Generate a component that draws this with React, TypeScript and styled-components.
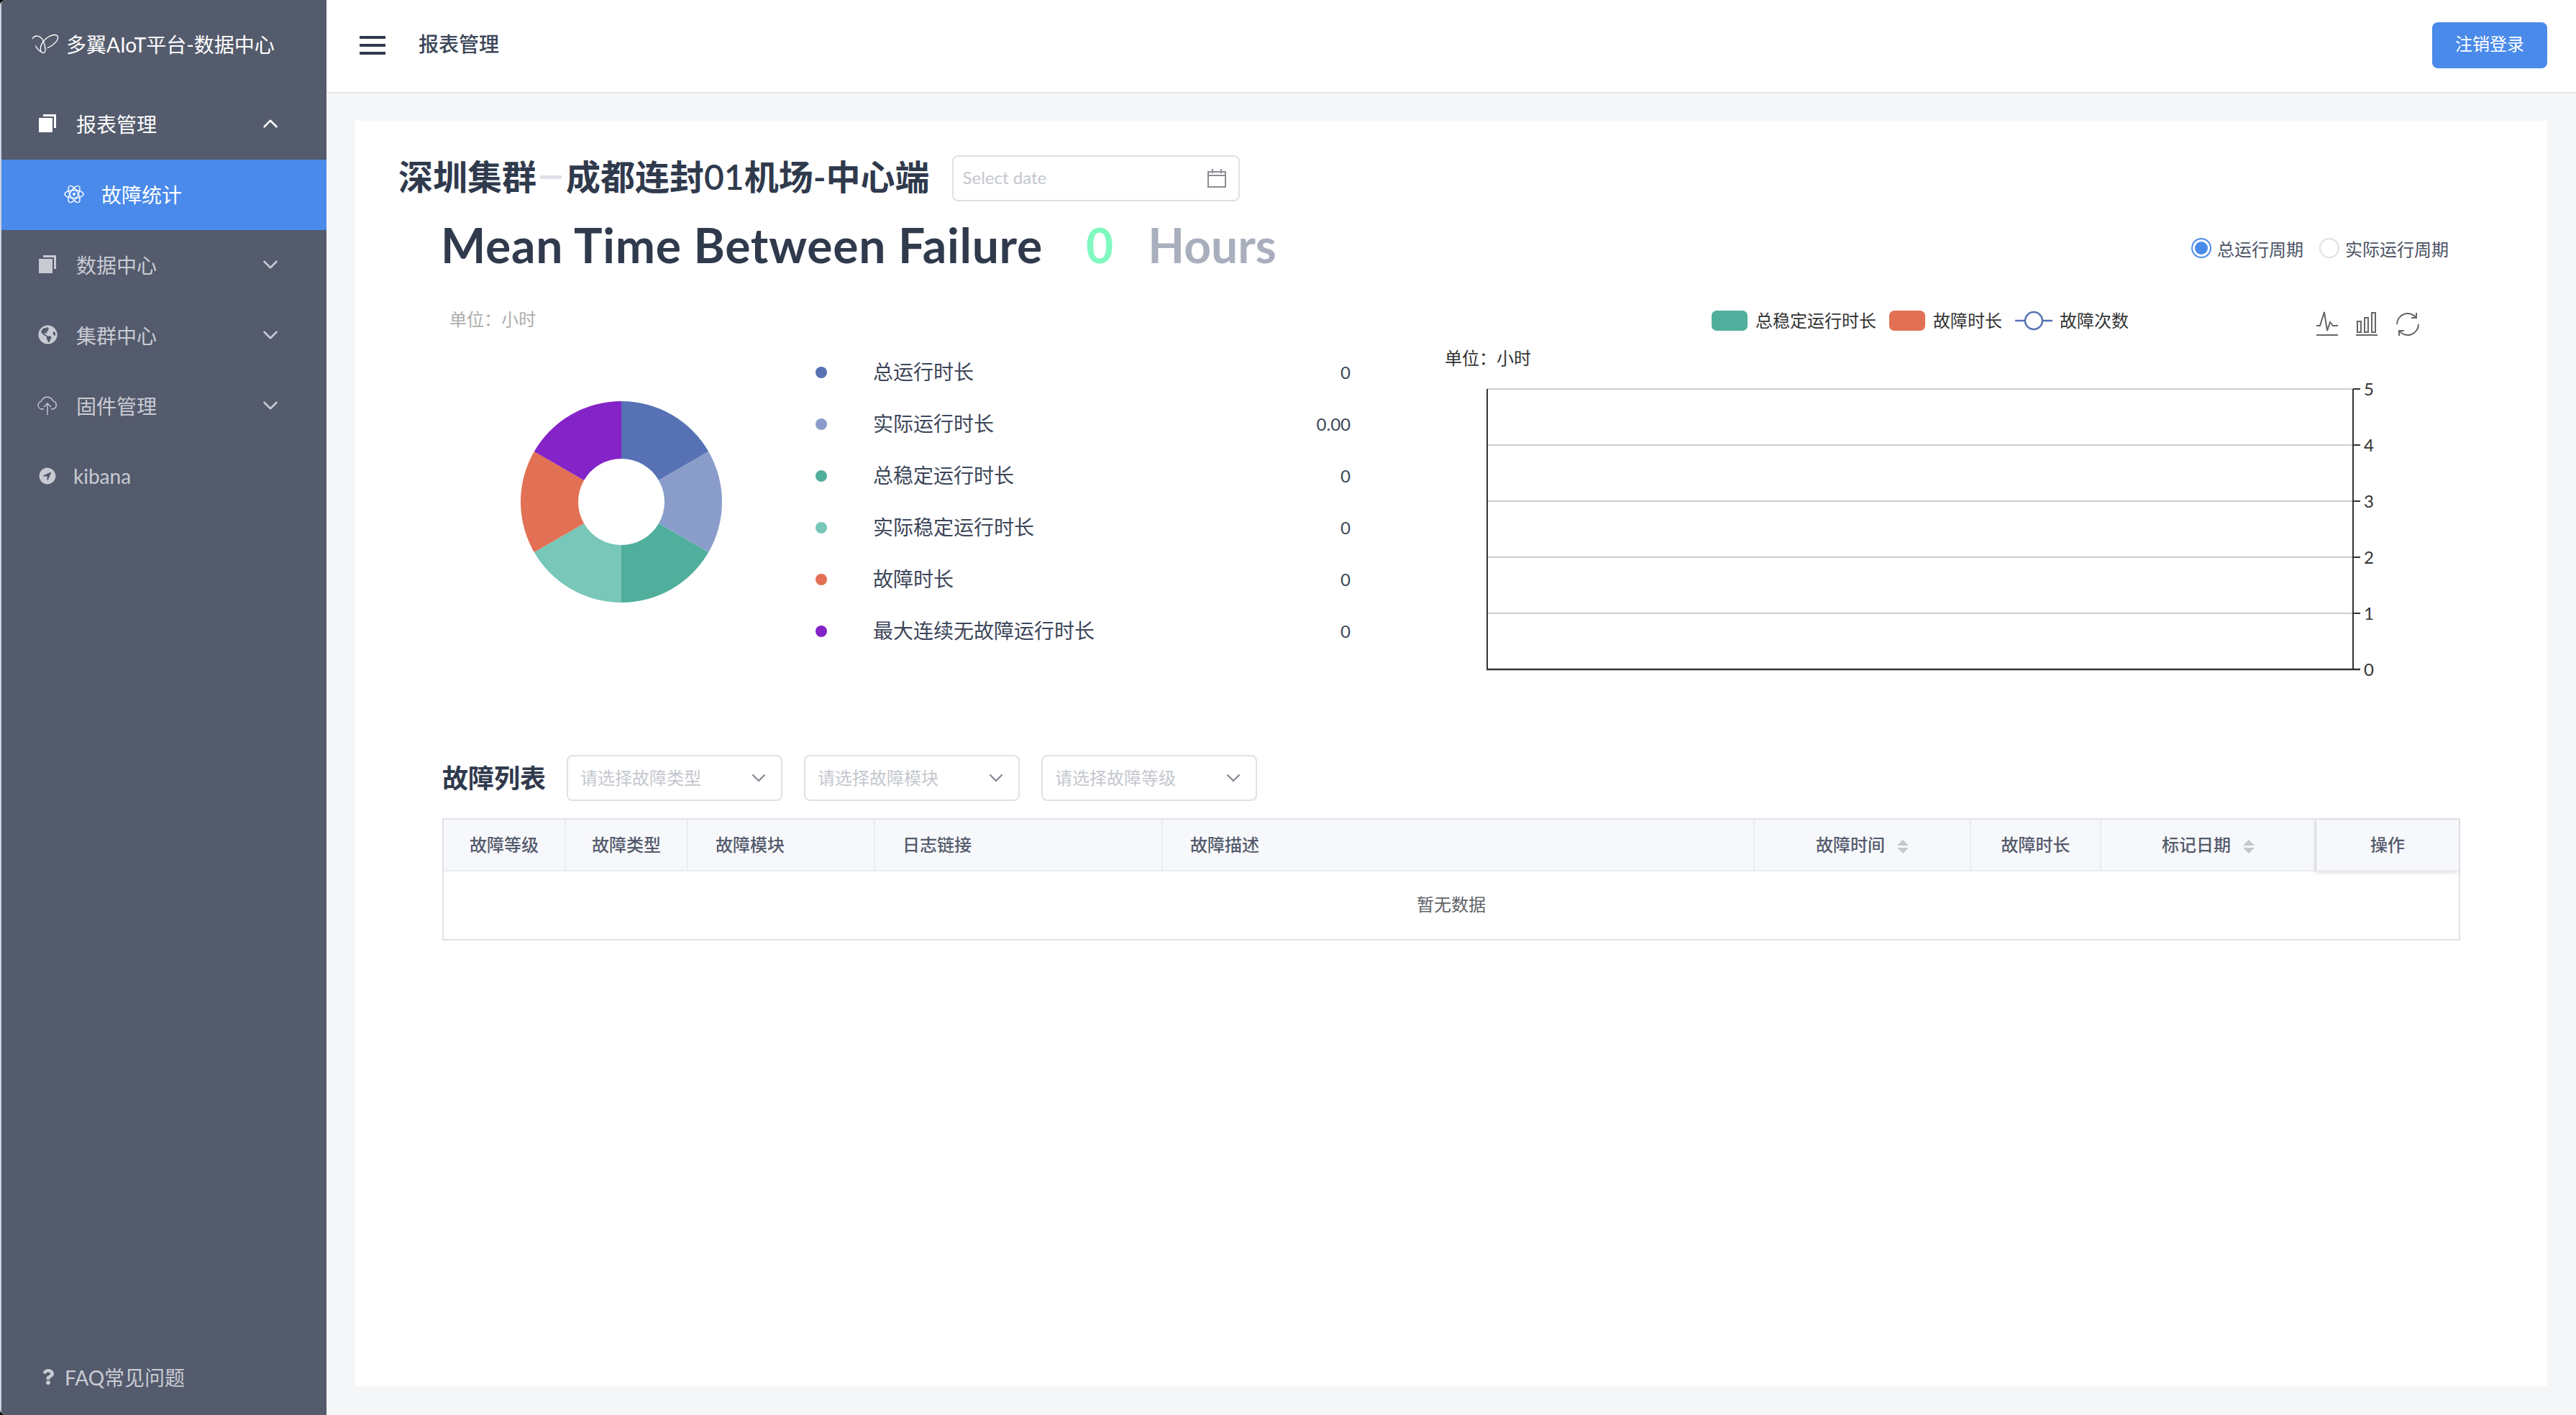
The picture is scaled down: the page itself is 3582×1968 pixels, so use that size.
import styled, { createGlobalStyle } from "styled-components";
import { ChevronDown, ChevronUp } from "lucide-react";
import { FaGlobeAmericas, FaQuestion } from "react-icons/fa";
import { IoNavigateCircle } from "react-icons/io5";

const GlobalStyle = createGlobalStyle`
  html, body {
    margin: 0;
    padding: 0;
    background: #000;
  }
  body {
    font-family: "Lato", "Noto Sans CJK SC", sans-serif;
    color: #303a4d;
  }
`;

const Shell = styled.div`
  width: 3582px;
  height: 1968px;
  display: flex;
  overflow: hidden;
  background: #f5f6f8;
  border-radius: 8px 0 0 8px;
`;

const Sidebar = styled.aside`
  width: 454px;
  flex: 0 0 454px;
  box-sizing: border-box;
  border-left: 2px solid #cdd4e2;
  background: #545b6d;
  display: flex;
  flex-direction: column;
  color: #c9cbd3;
  font-size: 28px;
`;

const Brand = styled.div`
  height: 124px;
  box-sizing: border-box;
  display: flex;
  align-items: center;
  gap: 10px;
  padding: 0 0 3px 42px;
  color: #fff;
`;

const NavRow = styled.div<{ $active?: boolean; $sub?: boolean; $open?: boolean; $gap?: number }>`
  height: 98px;
  flex: 0 0 98px;
  box-sizing: border-box;
  display: flex;
  align-items: center;
  gap: ${(p) => p.$gap ?? 26}px;
  padding: 0 61px 3px ${(p) => (p.$sub ? 87 : 50)}px;
  background: ${(p) => (p.$active ? "#4a8aea" : "transparent")};
  color: ${(p) => (p.$active || p.$open ? "#fff" : "#c9cbd3")};
`;

const NavIcon = styled.span`
  width: 28px;
  height: 28px;
  display: flex;
  align-items: center;
  justify-content: center;
  flex: none;
`;

const NavArrow = styled.span`
  margin-left: auto;
  display: flex;
`;

const Faq = styled.div`
  margin-top: auto;
  height: 106px;
  box-sizing: border-box;
  display: flex;
  align-items: center;
  gap: 12px;
  padding-left: 54px;
`;

const Main = styled.div`
  flex: 1;
  min-width: 0;
  display: flex;
  flex-direction: column;
`;

const TopBar = styled.header`
  height: 130px;
  flex: none;
  box-sizing: border-box;
  background: #fff;
  border-bottom: 2px solid #e4e6ea;
  display: flex;
  align-items: center;
  padding: 0 40px 3px 46px;
`;

const Hamburger = styled.div`
  width: 36px;
  height: 26px;
  box-sizing: border-box;
  border-top: 4px solid #2f3a4e;
  border-bottom: 4px solid #2f3a4e;
  display: flex;
  align-items: center;
  &::before {
    content: "";
    width: 100%;
    height: 4px;
    background: #2f3a4e;
  }
`;

const PageName = styled.div`
  margin-left: 46px;
  padding-bottom: 5px;
  font-size: 28px;
  font-weight: 500;
  color: #3c4659;
`;

const LogoutButton = styled.button`
  margin-left: auto;
  width: 160px;
  height: 64px;
  padding: 0 0 6px;
  border: 0;
  border-radius: 8px;
  background: #4a8aea;
  color: #fff;
  font: inherit;
  font-size: 24px;
`;

const Content = styled.main`
  flex: 1;
  min-height: 0;
  display: flex;
  padding: 38px 40px 40px;
`;

const Card = styled.section`
  flex: 1;
  box-sizing: border-box;
  background: #fff;
  padding: 48px 0 0 60px;
`;

const TitleRow = styled.div`
  display: flex;
  align-items: center;
  gap: 31px;
  height: 64px;
`;

const Title = styled.h1`
  margin: 0;
  padding-bottom: 4px;
  font-size: 48px;
  font-weight: 600;
  line-height: 60px;
  color: #303a4d;
  white-space: nowrap;
  display: flex;
  align-items: center;
`;

const TitleDash = styled.span`
  width: 30px;
  height: 5px;
  margin: 0 6px 0 5px;
  background: #dfe1e6;
`;

const Field = styled.div<{ $width: number; $left: number; $right: number }>`
  width: ${(p) => p.$width}px;
  height: 64px;
  box-sizing: border-box;
  border: 2px solid #dfe1e6;
  border-radius: 8px;
  display: flex;
  align-items: center;
  justify-content: space-between;
  padding: 0 ${(p) => p.$right}px 0 ${(p) => p.$left}px;
  font-size: 24px;
  color: #c4c7ce;
  background: #fff;
`;

const FieldText = styled.span`
  padding-bottom: 4px;
`;

const MttfRow = styled.div`
  height: 120px;
  margin-left: 59px;
  padding-right: 137px;
  display: flex;
  align-items: center;
`;

const MttfTitle = styled.h2`
  margin: 0;
  font-size: 66px;
  font-weight: 700;
  letter-spacing: 0.75px;
  color: #303a4d;
  white-space: nowrap;
`;

const MttfValue = styled.span`
  margin-left: 60px;
  font-size: 66px;
  font-weight: 700;
  color: #7ff9c0;
`;

const MttfUnit = styled.span`
  margin-left: 48px;
  font-size: 66px;
  font-weight: 700;
  color: #a9afbd;
`;

const RadioGroup = styled.div`
  margin-left: auto;
  display: flex;
  align-items: center;
  gap: 22px;
  font-size: 24px;
  color: #4b5364;
  padding-top: 10px;
`;

const RadioItem = styled.label`
  display: flex;
  align-items: center;
  gap: 8px;
`;

const RadioDot = styled.span<{ $checked?: boolean }>`
  width: 28px;
  height: 28px;
  box-sizing: border-box;
  border-radius: 50%;
  border: 2px solid ${(p) => (p.$checked ? "#4a8aea" : "#dfe1e6")};
  display: flex;
  align-items: center;
  justify-content: center;
  &::after {
    content: "";
    width: 18px;
    height: 18px;
    border-radius: 50%;
    background: ${(p) => (p.$checked ? "#4a8aea" : "transparent")};
  }
`;

const ChartRow = styled.div`
  display: flex;
  margin: 24px 0 0 64px;
`;

const StatsPanel = styled.div`
  width: 1391px;
  flex: none;
`;

const StatsUnit = styled.div`
  height: 40px;
  line-height: 40px;
  margin-left: 7px;
  font-size: 24px;
  color: #adadad;
`;

const StatsBody = styled.div`
  margin-top: 18px;
  display: flex;
  align-items: center;
`;

const Donut = styled.svg`
  display: block;
  width: 280px;
  height: 280px;
  margin-left: 106px;
  flex: none;
`;

const StatsList = styled.ul`
  list-style: none;
  margin: 0 0 0 130px;
  padding: 0;
  width: 744px;
`;

const StatsItem = styled.li`
  height: 72px;
  display: flex;
  align-items: center;
`;

const StatsDot = styled.span<{ $color: string }>`
  width: 16px;
  height: 16px;
  border-radius: 50%;
  background: ${(p) => p.$color};
  flex: none;
`;

const StatsLabel = styled.span`
  margin-left: 64px;
  padding-bottom: 4px;
  font-size: 28px;
  color: #3c4659;
`;

const StatsValue = styled.span`
  margin-left: auto;
  padding-bottom: 2px;
  font-size: 24px;
  color: #3c4659;
`;

const TrendPanel = styled.div`
  flex: 1;
  min-width: 0;
`;

const TrendTop = styled.div`
  height: 54px;
  display: flex;
  align-items: flex-start;
  margin-left: 371px;
`;

const Legend = styled.div`
  display: flex;
  align-items: center;
  height: 44px;
  font-size: 24px;
  color: #333;
`;

const LegendSwatch = styled.span<{ $color: string }>`
  width: 50px;
  height: 28px;
  margin: 0 11px 0 0;
  border-radius: 7px;
  background: ${(p) => p.$color};
`;

const LegendText = styled.span<{ $last?: boolean }>`
  margin-right: ${(p) => (p.$last ? 0 : 18)}px;
  padding-bottom: 3px;
`;

const LegendLine = styled.svg`
  display: block;
  width: 52px;
  height: 28px;
  margin-right: 10px;
`;

const Tools = styled.div`
  margin: 8px 0 0 261px;
  display: flex;
  gap: 25px;
`;

const TrendUnit = styled.div`
  height: 40px;
  line-height: 40px;
  font-size: 24px;
  color: #333;
`;

const Plot = styled.svg`
  display: block;
  width: 1290px;
  height: 420px;
  margin: 11px 0 0 58px;
  font-family: "Lato", "Noto Sans CJK SC", sans-serif;
  font-size: 24px;
`;

const FilterRow = styled.div`
  margin: 101px 0 0 61px;
  display: flex;
  align-items: center;
  gap: 30px;
`;

const FilterTitle = styled.h3`
  margin: 0 -1px 0 0;
  padding-bottom: 4px;
  font-size: 36px;
  font-weight: 600;
  color: #303a4d;
`;

const Table = styled.table`
  width: 2806px;
  margin: 24px 0 0 61px;
  box-sizing: border-box;
  border: 2px solid #dfe1e6;
  border-collapse: separate;
  border-spacing: 0;
  table-layout: fixed;
  font-size: 24px;
`;

const Th = styled.th<{ $left?: boolean; $fixed?: boolean }>`
  height: 72px;
  box-sizing: border-box;
  padding: 0 0 3px ${(p) => (p.$left ? 38 : 0)}px;
  text-align: ${(p) => (p.$left ? "left" : "center")};
  font-weight: 500;
  color: #545b6d;
  background: #f7f8fb;
  border-bottom: 2px solid #ebecf0;
  border-right: 2px solid #ebecf0;
  position: relative;
  ${(p) => (p.$fixed ? "border-right: 0; box-shadow: -2px 2px 5px rgba(0, 0, 0, 0.12);" : "")}
`;

const SortCarets = styled.span`
  display: inline-flex;
  flex-direction: column;
  gap: 3px;
  margin-left: 17px;
  vertical-align: middle;
  &::before,
  &::after {
    content: "";
    border-left: 8px solid transparent;
    border-right: 8px solid transparent;
  }
  &::before {
    border-bottom: 8px solid #c4c7ce;
  }
  &::after {
    border-top: 8px solid #c4c7ce;
  }
`;

const EmptyCell = styled.td`
  height: 94px;
  padding-bottom: 6px;
  box-sizing: border-box;
  text-align: center;
  color: #606266;
`;

const slices = ["#5672b4", "#8a9dca", "#50af9c", "#78c7b8", "#e27054", "#8423c7"];

const stats = [
  { label: "总运行时长", value: "0", color: slices[0] },
  { label: "实际运行时长", value: "0.00", color: slices[1] },
  { label: "总稳定运行时长", value: "0", color: slices[2] },
  { label: "实际稳定运行时长", value: "0", color: slices[3] },
  { label: "故障时长", value: "0", color: slices[4] },
  { label: "最大连续无故障运行时长", value: "0", color: slices[5] },
];

const columns = [
  { name: "故障等级", width: 170 },
  { name: "故障类型", width: 170 },
  { name: "故障模块", width: 260, left: true },
  { name: "日志链接", width: 400, left: true },
  { name: "故障描述", width: 823, left: true },
  { name: "故障时间", width: 301, sort: true },
  { name: "故障时长", width: 181 },
  { name: "标记日期", width: 299, sort: true },
  { name: "操作", width: 198, fixed: true },
];

const point = (r: number, deg: number) => {
  const a = ((deg - 90) * Math.PI) / 180;
  return `${140 + r * Math.cos(a)} ${140 + r * Math.sin(a)}`;
};

const slicePath = (i: number) => {
  const a = i * 60;
  const b = a + 60;
  return `M${point(60, a)} L${point(140, a)} A140 140 0 0 1 ${point(140, b)} L${point(60, b)} A60 60 0 0 0 ${point(60, a)} Z`;
};

const ticks = [
  { y: 12, label: "5" },
  { y: 90, label: "4" },
  { y: 168, label: "3" },
  { y: 246, label: "2" },
  { y: 324, label: "1" },
];

const Logo = () => (
  <svg width="38" height="30" viewBox="130 90 112 82" fill="none" stroke="#fff" strokeWidth="4">
    <path d="M133 110C145 92 170 95 180 125C187 145 190 168 178 168C165 165 150 150 146 138" />
    <path d="M194 148C225 135 245 110 235 98C222 88 190 100 172 130C166 140 165 150 168 160" />
  </svg>
);

const CopyIcon = () => (
  <svg width="24" height="25" viewBox="0 0 24 25" fill="currentColor">
    <path d="M6 0H24V19H21V3H6Z" />
    <rect x="0" y="5" width="19" height="20" />
  </svg>
);

const AtomIcon = () => (
  <svg width="28" height="30" viewBox="0 0 28 30" fill="none" stroke="#fff" strokeWidth="1.4">
    <ellipse cx="14" cy="15" rx="13" ry="5.5" />
    <ellipse cx="14" cy="15" rx="13" ry="5.5" transform="rotate(60 14 15)" />
    <ellipse cx="14" cy="15" rx="13" ry="5.5" transform="rotate(120 14 15)" />
    <circle cx="14" cy="15" r="2" fill="#fff" stroke="none" />
  </svg>
);

const CloudIcon = () => (
  <svg width="28" height="26" viewBox="0 0 28 26" fill="none" stroke="currentColor" strokeWidth="1.4">
    <path d="M9 18H6.5A5.5 5.5 0 0 1 5.5 7.1A8.5 8.5 0 0 1 21.5 6.6A5.8 5.8 0 0 1 21.5 18H19" />
    <path d="M14 26V10M9 15L14 10L19 15" />
  </svg>
);

const CalendarIcon = () => (
  <svg width="26" height="26" viewBox="0 0 26 26" fill="none" stroke="#8b8d92" strokeWidth="2">
    <rect x="1" y="4" width="24" height="21" />
    <path d="M1 9H25M7 0V6M19 0V6" />
  </svg>
);

const LineIcon = () => (
  <svg width="30" height="36" viewBox="0 0 30 36" fill="none" stroke="#666" strokeWidth="2">
    <path d="M0 21H5L11 2L15 28L19 16L23 21H30" />
    <path d="M0 34H30" />
  </svg>
);

const BarIcon = () => (
  <svg width="30" height="36" viewBox="0 0 30 36" fill="none" stroke="#666" strokeWidth="2">
    <path d="M2 15H7V30H2ZM12 10H17V30H12ZM22 3H27V30H22Z" />
    <path d="M0 34H30" />
  </svg>
);

const RefreshIcon = () => (
  <svg width="34" height="36" viewBox="0 0 34 36" fill="none" stroke="#666" strokeWidth="2">
    <path d="M2 19A15 15 0 0 1 29 10M29 3V10H22" />
    <path d="M32 19A15 15 0 0 1 5 28M5 35V28H12" />
  </svg>
);

const App = () => {
  return (
    <Shell>
      <GlobalStyle />
      <Sidebar>
        <Brand>
          <Logo />
          <span>多翼AIoT平台-数据中心</span>
        </Brand>
        <NavRow $open>
          <NavIcon>
            <CopyIcon />
          </NavIcon>
          报表管理
          <NavArrow>
            <ChevronUp size={34} strokeWidth={1.8} />
          </NavArrow>
        </NavRow>
        <NavRow $active $sub $gap={24}>
          <NavIcon>
            <AtomIcon />
          </NavIcon>
          故障统计
        </NavRow>
        <NavRow>
          <NavIcon>
            <CopyIcon />
          </NavIcon>
          数据中心
          <NavArrow>
            <ChevronDown size={34} strokeWidth={1.8} />
          </NavArrow>
        </NavRow>
        <NavRow>
          <NavIcon>
            <FaGlobeAmericas size={27} />
          </NavIcon>
          集群中心
          <NavArrow>
            <ChevronDown size={34} strokeWidth={1.8} />
          </NavArrow>
        </NavRow>
        <NavRow>
          <NavIcon>
            <CloudIcon />
          </NavIcon>
          固件管理
          <NavArrow>
            <ChevronDown size={34} strokeWidth={1.8} />
          </NavArrow>
        </NavRow>
        <NavRow $gap={22}>
          <NavIcon>
            <IoNavigateCircle size={30} />
          </NavIcon>
          kibana
        </NavRow>
        <Faq>
          <FaQuestion size={22} />
          FAQ常见问题
        </Faq>
      </Sidebar>
      <Main>
        <TopBar>
          <Hamburger />
          <PageName>报表管理</PageName>
          <LogoutButton>注销登录</LogoutButton>
        </TopBar>
        <Content>
          <Card>
            <TitleRow>
              <Title>
                深圳集群
                <TitleDash />
                成都连封01机场-中心端
              </Title>
              <Field $width={400} $left={13} $right={17}>
                <FieldText>Select date</FieldText>
                <CalendarIcon />
              </Field>
            </TitleRow>
            <MttfRow>
              <MttfTitle>Mean Time Between Failure</MttfTitle>
              <MttfValue>0</MttfValue>
              <MttfUnit>Hours</MttfUnit>
              <RadioGroup>
                <RadioItem>
                  <RadioDot $checked />
                  总运行周期
                </RadioItem>
                <RadioItem>
                  <RadioDot />
                  实际运行周期
                </RadioItem>
              </RadioGroup>
            </MttfRow>
            <ChartRow>
              <StatsPanel>
                <StatsUnit>单位：小时</StatsUnit>
                <StatsBody>
                  <Donut viewBox="0 0 280 280">
                    {slices.map((color, i) => (
                      <path key={color} d={slicePath(i)} fill={color} />
                    ))}
                  </Donut>
                  <StatsList>
                    {stats.map((item) => (
                      <StatsItem key={item.label}>
                        <StatsDot $color={item.color} />
                        <StatsLabel>{item.label}</StatsLabel>
                        <StatsValue>{item.value}</StatsValue>
                      </StatsItem>
                    ))}
                  </StatsList>
                </StatsBody>
              </StatsPanel>
              <TrendPanel>
                <TrendTop>
                  <Legend>
                    <LegendSwatch $color="#50af9c" />
                    <LegendText>总稳定运行时长</LegendText>
                    <LegendSwatch $color="#e27054" />
                    <LegendText>故障时长</LegendText>
                    <LegendLine viewBox="0 0 52 28">
                      <path d="M0 14H52" stroke="#5672b4" strokeWidth="2.5" />
                      <circle cx="26" cy="14" r="12" fill="#fff" stroke="#5672b4" strokeWidth="2.5" />
                    </LegendLine>
                    <LegendText $last>故障次数</LegendText>
                  </Legend>
                  <Tools>
                    <LineIcon />
                    <BarIcon />
                    <RefreshIcon />
                  </Tools>
                </TrendTop>
                <TrendUnit>单位：小时</TrendUnit>
                <Plot viewBox="0 0 1290 420">
                  {ticks.map((t) => (
                    <g key={t.label}>
                      <path d={`M1 ${t.y}H1205`} stroke="#ccc" strokeWidth="2" />
                      <path d={`M1205 ${t.y}H1215`} stroke="#333" strokeWidth="2" />
                      <text x="1220" y={t.y + 9} fill="#333">
                        {t.label}
                      </text>
                    </g>
                  ))}
                  <path d="M1 12V402M1205 12V402" stroke="#333" strokeWidth="2" fill="none" />
                  <path d="M0 402H1215" stroke="#333" strokeWidth="2.5" />
                  <text x="1220" y="411" fill="#333">
                    0
                  </text>
                </Plot>
              </TrendPanel>
            </ChartRow>
            <FilterRow>
              <FilterTitle>故障列表</FilterTitle>
              {["请选择故障类型", "请选择故障模块", "请选择故障等级"].map((text) => (
                <Field key={text} $width={300} $left={17} $right={15}>
                  <FieldText>{text}</FieldText>
                  <ChevronDown size={32} strokeWidth={1.5} color="#7d8290" />
                </Field>
              ))}
            </FilterRow>
            <Table>
              <colgroup>
                {columns.map((c) => (
                  <col key={c.name} width={c.width} />
                ))}
              </colgroup>
              <thead>
                <tr>
                  {columns.map((c) => (
                    <Th key={c.name} $left={c.left} $fixed={c.fixed}>
                      {c.name}
                      {c.sort && <SortCarets />}
                    </Th>
                  ))}
                </tr>
              </thead>
              <tbody>
                <tr>
                  <EmptyCell colSpan={9}>暂无数据</EmptyCell>
                </tr>
              </tbody>
            </Table>
          </Card>
        </Content>
      </Main>
    </Shell>
  );
};

export default App;
